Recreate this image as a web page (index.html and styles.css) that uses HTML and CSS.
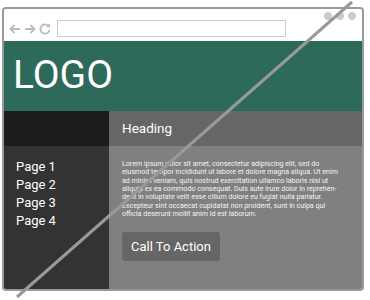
FILE: index.html
```html
<!DOCTYPE html>
<html lang="en">
<head>
    <meta charset="UTF-8">
    <meta name="viewport" content="width=device-width, initial-scale=1.0">
    <title>Wireframe</title>
    <link rel="stylesheet" href="styles.css">
</head>
<body>
    <div class="browser">
        <div class="toolbar">
            <div class="nav">
                <svg width="12" height="12" viewBox="0 0 12 12"><path d="M11 6H1.5M5.5 2L1.5 6l4 4" /></svg>
                <svg width="12" height="12" viewBox="0 0 12 12"><path d="M1 6h9.5M6.5 2l4 4-4 4" /></svg>
                <svg width="12" height="12" viewBox="0 0 12 12"><path d="M9.3 2.8A4.6 4.6 0 1 0 10.6 6.8" /><path d="M10.2 0.8v2.6H7.6" /></svg>
            </div>
            <div class="address"></div>
            <div class="dots">
                <span></span><span></span><span></span>
            </div>
        </div>

        <div class="header">LOGO</div>

        <div class="main">
            <div class="sidebar">
                <div class="sidebar-top"></div>
                <ul class="pages">
                    <li>Page 1</li>
                    <li>Page 2</li>
                    <li>Page 3</li>
                    <li>Page 4</li>
                </ul>
            </div>
            <div class="content">
                <h2 class="heading">Heading</h2>
                <div class="body">
                    <p class="lorem">
                        Lorem ipsum dolor sit amet, consectetur adipiscing elit, sed do<br>
                        eiusmod tempor incididunt ut labore et dolore magna aliqua. Ut enim<br>
                        ad minim veniam, quis nostrud exercitation ullamco laboris nisi ut<br>
                        aliquip ex ea commodo consequat. Duis aute irure dolor in reprehen-<br>
                        derit in voluptate velit esse cillum dolore eu fugiat nulla pariatur.<br>
                        Excepteur sint occaecat cupidatat non proident, sunt in culpa qui<br>
                        officia deserunt mollit anim id est laborum.
                    </p>
                    <button class="cta">Call To Action</button>
                </div>
            </div>
        </div>
    </div>

    <svg class="strike" width="370" height="300" viewBox="0 0 370 300">
        <line x1="352" y1="2" x2="17" y2="297" />
    </svg>
</body>
</html>
```

FILE: styles.css
```css
* {
    margin: 0;
    padding: 0;
    box-sizing: border-box;
}

html, body {
    width: 370px;
    height: 300px;
    overflow: hidden;
}

body {
    background: white;
    font-family: Roboto, "Liberation Sans", sans-serif;
    position: relative;
}

.browser {
    margin: 7px 0 0 2px;
    width: 362px;
    height: 284px;
    border: 2px solid #999;
    border-radius: 4px;
    overflow: hidden;
    display: flex;
    flex-direction: column;
}

.toolbar {
    height: 32px;
    flex: none;
    display: flex;
    align-items: flex-start;
    padding: 11px 0 0 5px;
    background: white;
}

.nav {
    display: flex;
    align-items: center;
    gap: 3px;
    height: 17px;
}

.nav svg {
    fill: none;
    stroke: #bbb;
    stroke-width: 1.8;
}

.address {
    width: 229px;
    height: 17px;
    margin-left: 6px;
    border: 1px solid #ccc;
}

.dots {
    margin: -8px 6px 0 auto;
    display: flex;
    gap: 4px;
}

.dots span {
    width: 8px;
    height: 8px;
    border-radius: 50%;
    background: #ccc;
}

.header {
    height: 70px;
    flex: none;
    background: #2e6a5a;
    color: white;
    font-size: 39px;
    line-height: 68px;
    padding-left: 9px;
}

.main {
    flex: 1;
    display: grid;
    grid-template-columns: 105px 1fr;
}

.sidebar {
    background: #333;
    display: flex;
    flex-direction: column;
}

.sidebar-top {
    height: 35px;
    background: #1c1c1c;
}

.pages {
    list-style: none;
    padding: 12px 0 0 12px;
    color: white;
    font-size: 13px;
    line-height: 18px;
}

.content {
    background: #808080;
    display: flex;
    flex-direction: column;
}

.heading {
    height: 35px;
    background: #666;
    color: white;
    font-size: 13.5px;
    font-weight: normal;
    line-height: 35px;
    padding-left: 13px;
}

.body {
    padding: 14px 0 0 13px;
}

.lorem {
    color: #f4f4f4;
    font-size: 7.1px;
    line-height: 8.33px;
    white-space: nowrap;
}

.cta {
    margin-top: 14px;
    width: 98px;
    height: 29px;
    border: none;
    border-radius: 3px;
    background: #666;
    color: white;
    font-family: Roboto, "Liberation Sans", sans-serif;
    font-size: 13px;
}

.strike {
    position: absolute;
    top: 0;
    left: 0;
    pointer-events: none;
}

.strike line {
    stroke: #999;
    stroke-width: 3;
}
```
